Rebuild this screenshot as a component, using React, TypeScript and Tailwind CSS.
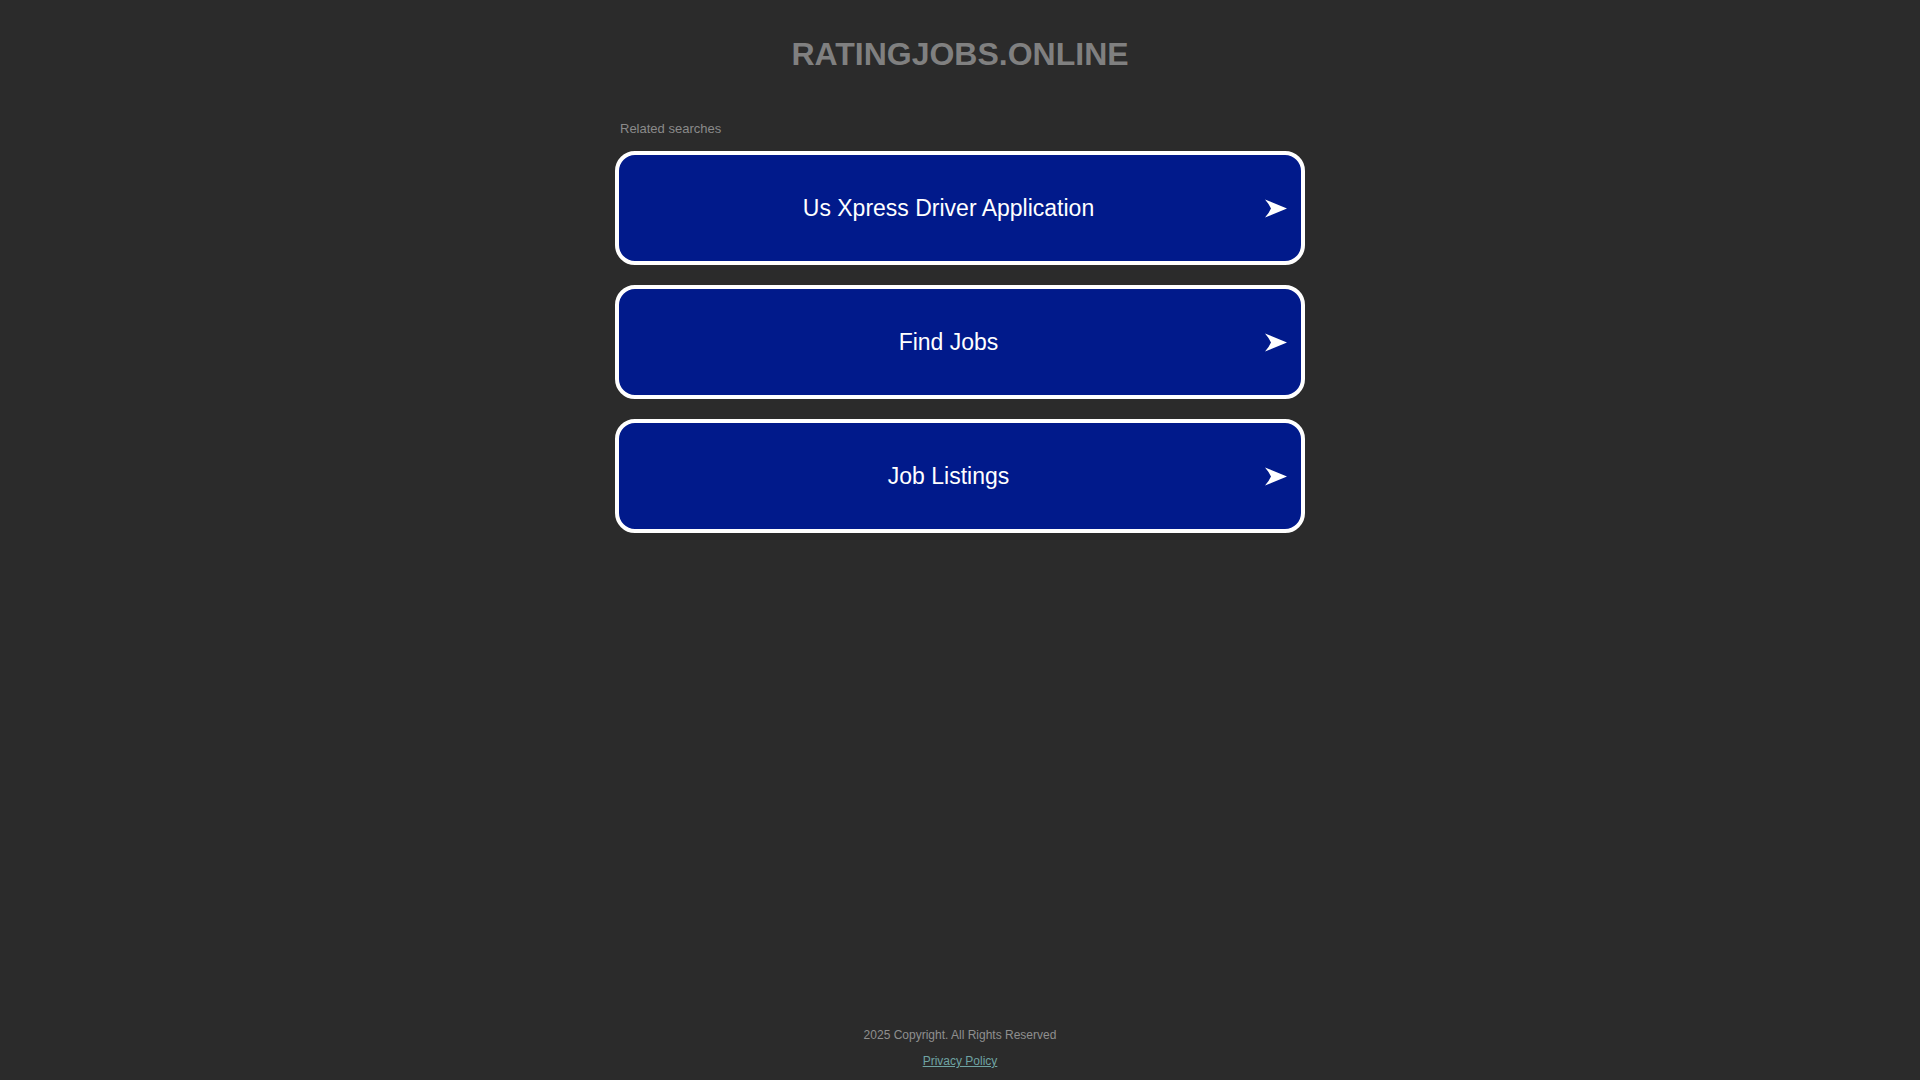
const searches = ['Us Xpress Driver Application', 'Find Jobs', 'Job Listings'];

const Arrow = () => (
  <svg width="22" height="19" viewBox="0 0 22 19" className="shrink-0">
    <path d="M0 0.5 L22 9.5 L0 18.5 Q4 14 6 9.5 Q4 5 0 0.5 Z" fill="#ffffff" />
  </svg>
);

const App = () => {
  return (
    <div className="flex min-h-screen flex-col bg-[#2b2b2b] font-['Liberation_Sans',Arial,sans-serif]">
      <header className="pt-[36px] text-center">
        <h1 className="text-[32px] font-bold leading-[37px] text-[#808080]">RATINGJOBS.ONLINE</h1>
      </header>

      <main className="mx-auto mt-[48px] w-[690px]">
        <p className="pl-[5px] text-[13px] leading-[15px] text-[#8a8a8a]">Related searches</p>
        <div className="mt-[15px] flex flex-col gap-5">
          {searches.map((s) => (
            <a
              key={s}
              href="#"
              className="flex h-[114px] items-center rounded-[20px] border-4 border-white bg-[#011a8b] pl-[13px] pr-[14px] text-white"
            >
              <span className="flex-1 text-center text-[23px] leading-[27px]">{s}</span>
              <Arrow />
            </a>
          ))}
        </div>
      </main>

      <footer className="mt-auto flex flex-col items-center gap-3 pb-3 text-[12px] leading-[14px]">
        <p className="text-[#8f8f8f]">2025 Copyright. All Rights Reserved</p>
        <a href="#" className="text-[#6fa3a3] underline">Privacy Policy</a>
      </footer>
    </div>
  );
};

export default App;
